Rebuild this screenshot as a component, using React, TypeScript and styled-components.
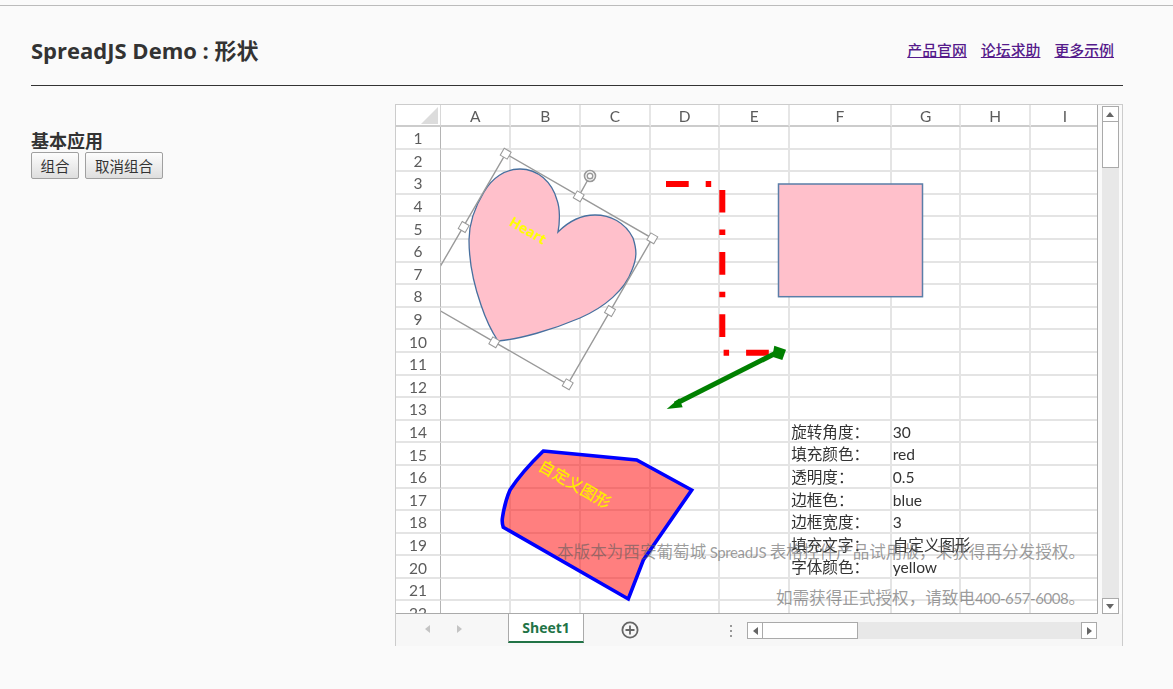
import React from "react";
import styled, { createGlobalStyle } from "styled-components";

const GlobalStyle = createGlobalStyle`
  html, body {
    margin: 0;
    padding: 0;
    background: #fafafa;
    font-family: "Open Sans", "Noto Sans CJK SC", sans-serif;
    color: #333;
  }
`;

const Page = styled.div`
  height: 689px;
  padding-top: 5px;
  box-sizing: border-box;
  overflow: hidden;
`;

const Wrapper = styled.div`
  border-top: 1px solid #bbb;
  padding: 0 50px 0 31px;
`;

const Header = styled.header`
  display: flex;
  align-items: center;
  justify-content: space-between;
  height: 80px;
  box-sizing: border-box;
  border-bottom: 1px solid #333;
  padding: 6px 9px 0 0;
`;

const Title = styled.h1`
  margin: 0;
  font-size: 22px;
  font-weight: 700;
  color: #333;
`;

const Links = styled.nav`
  display: flex;
  gap: 14px;
  padding-top: 2px;
`;

const TopLink = styled.a`
  font-size: 14.9px;
  font-weight: 500;
  color: #551a8b;
  text-decoration: underline;
`;

const Content = styled.main`
  display: flex;
  padding-top: 18px;
`;

const Side = styled.aside`
  width: 364px;
  flex: none;
  padding-top: 26px;
`;

const SideTitle = styled.h3`
  margin: 0;
  font-size: 18px;
  line-height: 22px;
  font-weight: 700;
  color: #333;
`;

const ButtonRow = styled.div`
  display: flex;
  gap: 6px;
`;

const DemoButton = styled.button<{ $w: number }>`
  width: ${({ $w }) => $w}px;
  height: 27px;
  padding: 0;
  border: 1px solid #a0a0a0;
  border-radius: 2px;
  background: linear-gradient(#fdfdfd, #dedede);
  font-family: "Noto Sans CJK SC", sans-serif;
  font-size: 14.5px;
  color: #333;
`;

const Sheet = styled.section`
  width: 728px;
  height: 542px;
  box-sizing: border-box;
  border: 1px solid #ccc;
  border-bottom: none;
  display: flex;
  flex-direction: column;
  background: #fff;
`;

const SheetMain = styled.div`
  display: flex;
  height: 509px;
  flex: none;
`;

const GridPane = styled.div`
  position: relative;
  width: 702px;
  flex: none;
  overflow: hidden;
  border-right: 1px solid #aaa;
  border-bottom: 1px solid #aaa;
  box-sizing: border-box;
`;

const Grid = styled.div`
  display: grid;
  grid-template-columns: 45px 70.4px repeat(4, 69.7px) 101.6px repeat(3, 69.7px);
  grid-template-rows: 22px repeat(22, 22.6px);
  font-family: "Lato", "Noto Sans CJK SC", sans-serif;
  filter: blur(0.35px);
`;

const Corner = styled.div`
  position: relative;
  box-sizing: border-box;
  border-right: 1px solid #d8d8d8;
  border-bottom: 2px solid #ccc;
  &::after {
    content: "";
    position: absolute;
    right: 2px;
    bottom: 1px;
    border-style: solid;
    border-width: 0 0 17px 17px;
    border-color: transparent transparent #dcdcdc transparent;
  }
`;

const ColHead = styled.div`
  box-sizing: border-box;
  border-right: 2px solid #e6e6e6;
  border-bottom: 2px solid #ccc;
  padding-top: 1px;
  display: flex;
  align-items: center;
  justify-content: center;
  font-size: 15.5px;
  color: #5c5c5c;
`;

const RowHead = styled.div`
  box-sizing: border-box;
  border-right: 1px solid #b4b4b4;
  border-bottom: 2px solid #e4e4e4;
  padding-top: 2px;
  display: flex;
  align-items: center;
  justify-content: center;
  font-size: 15.5px;
  color: #5c5c5c;
`;

const Cell = styled.div`
  box-sizing: border-box;
  border-right: 2px solid #e4e4e4;
  border-bottom: 2px solid #e4e4e4;
  padding-left: 1px;
  font-size: 15.6px;
  line-height: 22px;
  color: #333;
  white-space: nowrap;
`;

const ShapeLayer = styled.svg`
  position: absolute;
  left: 45px;
  top: 22px;
  width: 656px;
  height: 487px;
  filter: blur(0.3px);
`;

const ShapeText = styled.text<{ $size: number; $weight: number }>`
  font-family: "Open Sans", "Noto Sans CJK SC", sans-serif;
  font-size: ${({ $size }) => $size}px;
  font-weight: ${({ $weight }) => $weight};
  text-anchor: middle;
  dominant-baseline: central;
`;

const Watermark = styled.div`
  position: absolute;
  right: 12px;
  top: 424px;
  text-align: right;
  font-family: "Noto Sans CJK SC", sans-serif;
  font-size: 16.6px;
  line-height: 45px;
  color: rgba(90, 90, 90, 0.6);
  white-space: nowrap;
  pointer-events: none;
`;

const Latin = styled.span`
  font-family: "Lato", sans-serif;
  font-size: 15px;
  letter-spacing: -0.4px;
`;

const VBar = styled.div`
  flex: 1;
  display: flex;
  flex-direction: column;
  align-items: center;
  padding: 1px 0 0;
  background: #fafafa;
`;

const VTrack = styled.div`
  width: 17px;
  flex: 1;
  display: flex;
  flex-direction: column;
  background: #e8e8e8;
`;

const ScrollBtn = styled.div<{ $dir: "up" | "down" | "left" | "right" }>`
  box-sizing: border-box;
  width: ${({ $dir }) => ($dir === "left" || $dir === "right" ? "16px" : "17px")};
  height: ${({ $dir }) => ($dir === "left" || $dir === "right" ? "17px" : "16px")};
  flex: none;
  background: #fff;
  border: 1px solid #aaa;
  display: flex;
  align-items: center;
  justify-content: center;
  &::before {
    content: "";
    border-style: solid;
    border-color: transparent;
    ${({ $dir }) =>
      $dir === "up"
        ? "border-width: 0 4px 5px 4px; border-bottom-color: #666;"
        : $dir === "down"
        ? "border-width: 5px 4px 0 4px; border-top-color: #666;"
        : $dir === "left"
        ? "border-width: 4px 5px 4px 0; border-right-color: #666;"
        : "border-width: 4px 0 4px 5px; border-left-color: #666;"}
  }
`;

const VThumb = styled.div`
  box-sizing: border-box;
  height: 46px;
  background: #fff;
  border: 1px solid #aaa;
  border-top: none;
`;

const VFill = styled.div`
  flex: 1;
`;

const TabStrip = styled.div`
  flex: 1;
  display: flex;
  align-items: flex-start;
  background: #f7f7f7;
`;

const NavArrows = styled.div`
  width: 112px;
  height: 30px;
  flex: none;
  display: flex;
  align-items: center;
  gap: 27px;
  padding-left: 29px;
  box-sizing: border-box;
`;

const NavArrow = styled.span<{ $left?: boolean }>`
  border-style: solid;
  border-color: transparent;
  border-width: ${({ $left }) => ($left ? "4px 5px 4px 0" : "4px 0 4px 5px")};
  ${({ $left }) => ($left ? "border-right-color: #c4c4c4;" : "border-left-color: #c4c4c4;")}
`;

const SheetTab = styled.div`
  box-sizing: border-box;
  width: 76px;
  height: 29px;
  flex: none;
  background: #fff;
  border-left: 1px solid #aaa;
  border-right: 1px solid #aaa;
  border-bottom: 2px solid #217346;
  display: flex;
  align-items: center;
  justify-content: center;
  font-size: 14px;
  font-weight: 700;
  color: #217346;
`;

const AddSheet = styled.svg`
  width: 20px;
  height: 20px;
  flex: none;
  margin: 6px 0 0 36px;
`;

const Dots = styled.div`
  display: flex;
  flex-direction: column;
  gap: 3px;
  margin: 11px 0 0 90px;
  width: 17px;
  flex: none;
  span {
    width: 2px;
    height: 2px;
    background: #999;
  }
`;

const HBar = styled.div`
  flex: 1;
  display: flex;
  margin: 8px 25px 0 0;
  background: #e8e8e8;
`;

const HThumb = styled.div`
  box-sizing: border-box;
  width: 95px;
  background: #fff;
  border: 1px solid #aaa;
  border-left: none;
`;

const links = ["产品官网", "论坛求助", "更多示例"];
const columns = ["A", "B", "C", "D", "E", "F", "G", "H", "I"];
const rows = Array.from({ length: 22 }, (_, i) => i + 1);

const sheetData: Record<number, [string, string]> = {
  14: ["旋转角度：", "30"],
  15: ["填充颜色：", "red"],
  16: ["透明度：", "0.5"],
  17: ["边框色：", "blue"],
  18: ["边框宽度：", "3"],
  19: ["填充文字：", "自定义图形"],
  20: ["字体颜色：", "yellow"],
};

const handles = [
  [505.7, 153.7],
  [578.7, 196.3],
  [652.3, 238.3],
  [610, 311],
  [567.7, 384.3],
  [494.3, 342.3],
  [463.7, 227],
];

const heart =
  "M558 232 C560 222 560 208 557 200 C552 182 538 169 520 169 C505 169 492 178 484 192 C473 210 469 225 469 240 C469 262 474 285 481 305 C486 320 492 332 498 341 C520 339 552 330 580 318 C605 307 625 290 632 270 C637 258 637 250 633 238 C625 222 610 215 595 215 C580 215 568 222 558 232 Z";

const customShape =
  "M543.3 451 L636.7 460 L691.7 490 L643.3 560 L628.3 599 L503.3 527.3 C501.8 523 502 520 502.6 516.7 C504 508 506 499 510 490 C519 476 531 463 543.3 451 Z";

const Shapes: React.FC = () => (
  <ShapeLayer viewBox="441 127 656 487">
    <path d={heart} fill="#ffc0cb" stroke="#47709f" strokeWidth="1.3" />
    <ShapeText x="528" y="230" $size={14} $weight={700} fill="#ffff00" transform="rotate(30 528 230)">
      Heart
    </ShapeText>

    <path
      d="M505.7 153.7 L652.3 238.3 L567.7 384.3 L421 299.7 Z M578.7 196.3 L590 176"
      fill="none"
      stroke="#999"
      strokeWidth="1.4"
    />
    <circle cx="590" cy="176" r="5.5" fill="#fff" stroke="#999" strokeWidth="1.6" />
    <circle cx="590" cy="176" r="2.8" fill="#fff" stroke="#999" strokeWidth="1.4" />
    {handles.map(([x, y]) => (
      <rect
        key={x}
        x={x - 4}
        y={y - 4}
        width="8"
        height="8"
        fill="#fff"
        stroke="#999"
        transform={`rotate(30 ${x} ${y})`}
      />
    ))}

    <rect x="778.5" y="184" width="144" height="112.7" fill="#ffc0cb" stroke="#5a7ea8" strokeWidth="1.5" />

    <path
      d="M666 184 H722.3 V352.7 H775"
      fill="none"
      stroke="#ff0000"
      strokeWidth="6"
      strokeDasharray="22.7 17 5.5 17"
    />

    <path d="M675 404 L778 352" stroke="#008000" strokeWidth="5" fill="none" />
    <path d="M666.7 409 L679.3 398.3 L682.7 407.3 Z" fill="#008000" />
    <path d="M774.3 345.7 L786 349.7 L782.3 360 L772.3 356.7 Z" fill="#008000" />

    <path d={customShape} fill="rgba(255,0,0,0.5)" stroke="#0000ff" strokeWidth="3.6" />
    <ShapeText x="575" y="484" $size={16} $weight={500} fill="#ffee00" transform="rotate(30 575 484)">
      自定义图形
    </ShapeText>
  </ShapeLayer>
);

const App: React.FC = () => {
  return (
    <Page>
      <GlobalStyle />
      <Wrapper>
        <Header>
          <Title>SpreadJS Demo : 形状</Title>
          <Links>
            {links.map((l) => (
              <TopLink key={l} href="#">
                {l}
              </TopLink>
            ))}
          </Links>
        </Header>
        <Content>
          <Side>
            <SideTitle>基本应用</SideTitle>
            <ButtonRow>
              <DemoButton $w={48}>组合</DemoButton>
              <DemoButton $w={78}>取消组合</DemoButton>
            </ButtonRow>
          </Side>
          <Sheet>
            <SheetMain>
              <GridPane>
                <Grid>
                  <Corner />
                  {columns.map((c) => (
                    <ColHead key={c}>{c}</ColHead>
                  ))}
                  {rows.map((r) => (
                    <React.Fragment key={r}>
                      <RowHead>{r}</RowHead>
                      {columns.map((c) => (
                        <Cell key={c}>
                          {c === "F" && sheetData[r]?.[0]}
                          {c === "G" && sheetData[r]?.[1]}
                        </Cell>
                      ))}
                    </React.Fragment>
                  ))}
                </Grid>
                <Shapes />
                <Watermark>
                  本版本为西安葡萄城<Latin> SpreadJS </Latin>表格控件产品试用版，未获得再分发授权。
                  <br />
                  如需获得正式授权，请致电<Latin>400-657-6008</Latin>。
                </Watermark>
              </GridPane>
              <VBar>
                <VTrack>
                  <ScrollBtn $dir="up" />
                  <VThumb />
                  <VFill />
                  <ScrollBtn $dir="down" />
                </VTrack>
              </VBar>
            </SheetMain>
            <TabStrip>
              <NavArrows>
                <NavArrow $left />
                <NavArrow />
              </NavArrows>
              <SheetTab>Sheet1</SheetTab>
              <AddSheet viewBox="0 0 20 20">
                <circle cx="10" cy="10" r="7.6" fill="none" stroke="#666" strokeWidth="1.8" />
                <path d="M10 5.5 V14.5 M5.5 10 H14.5" stroke="#666" strokeWidth="1.8" />
              </AddSheet>
              <Dots>
                <span />
                <span />
                <span />
              </Dots>
              <HBar>
                <ScrollBtn $dir="left" />
                <HThumb />
                <VFill />
                <ScrollBtn $dir="right" />
              </HBar>
            </TabStrip>
          </Sheet>
        </Content>
      </Wrapper>
    </Page>
  );
};

export default App;
